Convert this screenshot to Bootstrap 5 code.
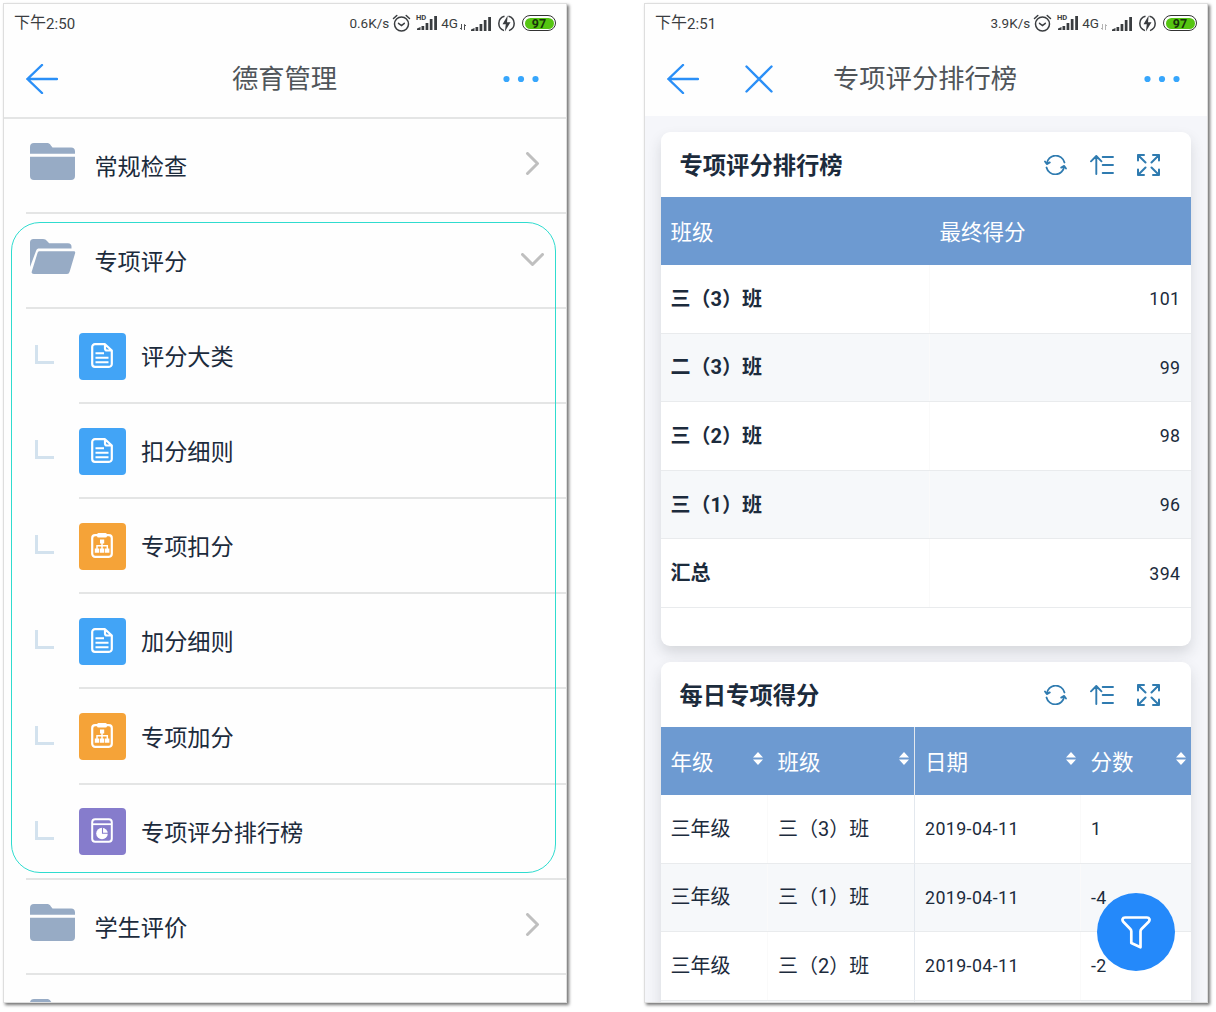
<!DOCTYPE html>
<html lang="zh-CN">
<head>
<meta charset="utf-8">
<meta name="viewport" content="width=device-width, initial-scale=1">
<title>德育管理</title>
<link href="https://cdn.jsdelivr.net/npm/bootstrap@5.3.0/dist/css/bootstrap.min.css" rel="stylesheet">
<style>
  body { font-family: Roboto, "Noto Sans CJK SC", sans-serif; background: #fff; color: #1c2b3c; min-height: 100vh; }
  svg { display: block; flex: none; overflow: visible; }
  .stage { padding: 3px 0 0 3px; gap: 77px; height: 1012px; overflow: hidden; }
  .phone { width: 564px; height: 1000px; border: 1px solid #dedede; background: #fefefe; box-shadow: 2px 2px 3px rgba(0,0,0,.55); overflow: hidden; flex: none; }

  .statusbar { height: 38px; padding: 0 10px 0 10px; color: #3a3d40; font-size: 13.5px; line-height: 38px; }
  .statusbar .clock { font-size: 16px; }
  .statusbar .clock span { font-size: 15px; letter-spacing: .1px; position: relative; top: 1px; }
  .batt { width: 34px; height: 16px; border: 1.5px solid #333; border-radius: 8px; padding: 1.5px; margin-left: 7px; }
  .batt div { background: #55c511; border-radius: 6px; height: 100%; color: #17330a; font-size: 12.5px; font-weight: 700; line-height: 11px; text-align: center; }

  .topbar { height: 74px; padding: 0 27px 0 22px; color: #50555a; }
  .topbar h1 { font-size: 26.3px; font-weight: 400; line-height: 40px; margin: 0; }
  .topbar.ruled { height: 77px; padding-bottom: 2px; border-bottom: 2px solid #e4e5e5; }
  .topbar.ruled h1 { margin-left: 8px; }

  .menu-row { height: 95.09px; margin-left: 22px; border-bottom: 2px solid #e4e5e5; padding: 0 26px 0 4px; }
  .menu-row.sub { margin-left: 75px; padding-left: 0; }
  .menu-row.last-sub { margin-left: 22px; padding-left: 53px; }
  .menu-row .cap { font-size: 23.2px; line-height: 34px; margin-left: 19.4px; padding-top: 3px; }
  .menu-row.sub .cap { margin-left: 15px; }
  .menu-row .folder { margin-bottom: 8px; }
  .elbow { width: 19px; height: 19px; border: solid #d3e2ee; border-width: 0 0 3px 3px; margin: -2px 25px 0 -44px; }
  .tile { width: 47px; height: 47px; border-radius: 4px; color: #fff; margin-top: 1px; }
  .tile svg { margin: -2px 1px 0 0; }
  .tile-blue { background: #42a4f6; } .tile-orange { background: #f5a338; } .tile-violet { background: #867ccc; }
  .frame { left: 7px; top: 218px; width: 545px; height: 651px; border: 1px solid #2fdccf; border-radius: 29px; pointer-events: none; }

  .board { background: #f5f6fa; height: 889px; padding: 16px 15px 0 15.5px; }
  .panel { --bs-card-border-width: 0; --bs-card-border-radius: 9px; border-radius: 9px; box-shadow: 0 7px 14px rgba(40,45,55,.15); height: 514px; margin-bottom: 16px; overflow: hidden; color: #1c2b3c; width: 530px; }
  .panel-head { height: 65px; flex: none; padding: 0 31px 0 19px; color: #2f7bb0; }
  .panel-head h2 { font-size: 23.3px; font-weight: 700; margin: 0; padding-top: 4px; color: #1c2b3c; }
  .panel-head .tools { gap: 23px; }
  .grid-tb { table-layout: fixed; margin: 0; font-size: 20px; width: 530px; }
  .grid-tb > :not(caption) > * > * { padding: 0 10px 0 10px; height: 68.6px; border-bottom: 1px solid #e9ebed; vertical-align: middle; background: #fff; color: #1c2b3c; box-shadow: none; white-space: nowrap; line-height: 30px; }
  .grid-tb > thead > tr > th { height: 67.5px; background: #6d9ad1; color: #fff; font-size: 21.5px; font-weight: 400; border-bottom: 0; padding-top: 4px; }
  .grid-tb > tbody > tr:nth-child(even) > td { background: #f6f8fa; }
  .grid-tb > tbody > tr > td + td { border-left: 1px solid #fafafa; }
  .grid-tb > thead > tr > th.split, .grid-tb > tbody > tr > td.split { border-right: 1px solid #e3e8ee; }
  .grid-tb > tbody > tr > td.num { font-size: 17.8px; letter-spacing: .4px; padding-top: 1px; }
  .grid-tb > thead > tr > th.sorter { padding-right: 5px; }
  .fab { right: 32px; bottom: 31px; width: 78px; height: 78px; border-radius: 50%; background: #2489fa; color: #fff; }
</style>
</head>
<body>
<svg width="0" height="0" class="position-absolute">
  <symbol id="back" viewBox="0 0 32 30"><path d="M16 1 1.500 15l14.500 14M1.500 15h29.500" fill="none" stroke="#2a8ff7" stroke-width="2.400" stroke-linecap="round"/></symbol>
  <symbol id="dots" viewBox="0 0 36 8"><g fill="#37a6fc"><circle cx="3.500" cy="4" r="3.100"/><circle cx="18" cy="4" r="3.100"/><circle cx="32.500" cy="4" r="3.100"/></g></symbol>
  <symbol id="alarm" viewBox="0 0 19 18"><g fill="none" stroke="#3a3d40" stroke-width="1.500" stroke-linecap="round"><circle cx="9.500" cy="10" r="7"/><path d="m6.500 9.300 3 2.200 2.800-2.200M1.500 4.500 4.800 1.500M17.500 4.500l-3.300-3"/></g></symbol>
  <symbol id="signal" viewBox="0 0 20 15"><path d="M0 15v-1.500L3.500 12v3zM4.500 11h2.700v4H4.500zM8.600 8h2.700v7H8.600zM12.800 4h2.700v11h-2.700zM17.200 1h2.800v14h-2.800z" fill="#3a3d40"/></symbol>
  <symbol id="updown" viewBox="0 0 6 6"><path d="M1.500 0v5.500L0 4M4.500 6V.5L6 2" fill="none" stroke="currentColor" stroke-width=".9"/></symbol>
  <symbol id="bolt" viewBox="0 0 17 17"><path d="M6.500 1.200a7.500 7.500 0 0 0-.5 14.400M10.500 1.200a7.500 7.500 0 0 1 .5 14.400" fill="none" stroke="#3a3d40" stroke-width="1.500"/><path d="M9.700.5 4.500 9.300h3.300L6.900 16.500l5.600-9.300H9z" fill="#3a3d40"/></symbol>
  <symbol id="folder" viewBox="0 0 45 37"><path d="M0 10.700V4a4 4 0 0 1 4-4h13.500c1.600 0 2.400 1 3.200 2.200L22.500 4.500H41a4 4 0 0 1 4 4v2.200zM0 13.700h45V33a4 4 0 0 1-4 4H4a4 4 0 0 1-4-4z" fill="#97abc5"/></symbol>
  <symbol id="folder-open" viewBox="0 0 46 35"><path d="M0 28V3.500A3.500 3.500 0 0 1 3.500 0H13c2 0 3 .8 4 2l2.200 2.200H38a3.500 3.500 0 0 1 3.500 3.500V9.500H9.500C7.500 9.500 6.700 10 6 12zM9.500 12.300h34c1.500 0 2 .8 1.600 2L39.700 32.500c-.6 1.700-1.200 2.500-2.700 2.500H4c-2 0-2.700-1-2.200-2.500L7.500 14c.4-1.200 1-1.700 2-1.700z" fill="#97abc5"/></symbol>
  <symbol id="right" viewBox="0 0 13 23"><path d="m1.500 1.500 10 10-10 10" fill="none" stroke="#bfbfbf" stroke-width="3" stroke-linecap="round" stroke-linejoin="round"/></symbol>
  <symbol id="down" viewBox="0 0 23 13"><path d="m1.500 1.500 10 10 10-10" fill="none" stroke="#bfbfbf" stroke-width="3" stroke-linecap="round" stroke-linejoin="round"/></symbol>
  <symbol id="doc" viewBox="0 0 22 25"><g fill="none" stroke="#fff" stroke-width="2.200"><path d="M14 1.200H4a2.800 2.800 0 0 0-2.800 2.800v17A2.800 2.800 0 0 0 4 23.800h14a2.800 2.800 0 0 0 2.800-2.800V7.500zM14 1.200V5.500a2 2 0 0 0 2 2h4.800" stroke-linejoin="round"/><path d="M4.500 10.200h8.500M4.500 14.700h13M4.500 19.200h13" stroke-width="2"/></g></symbol>
  <symbol id="org" viewBox="0 0 22 25"><rect x="1.200" y="2.200" width="19.600" height="21.600" rx="3" fill="none" stroke="#fff" stroke-width="2.200"/><rect x="6" y="0" width="10" height="4.500" rx="1.500" fill="#fff"/><path d="M9 6.500h4.200v4H9zM3.800 15.500h4.400v4.300H3.800zM8.900 15.500h4.400v4.300H8.900zM14 15.500h4.400v4.300H14z" fill="#fff"/><path d="M11 10v6M6 16v-3.200h10.300V16" fill="none" stroke="#fff" stroke-width="1.500"/></symbol>
  <symbol id="report" viewBox="0 0 22 25"><rect x="1.200" y="1.200" width="19.600" height="22.600" rx="3" fill="none" stroke="#fff" stroke-width="2"/><path d="M2 6.200h18" stroke="#fff" stroke-width="1.800"/><circle cx="11" cy="15.500" r="5.800" fill="#fff"/><path d="M11.500 9.500v5.700h5.700" fill="none" stroke="#867ccc" stroke-width="1.100"/></symbol>
  <symbol id="refresh" viewBox="0 0 22 20"><g fill="none" stroke="currentColor" stroke-width="1.800" stroke-linecap="round" stroke-linejoin="round"><path d="M2.300 8.800A9 9 0 0 1 20 7.500M19.700 11.200A9 9 0 0 1 2 12.500M.5 6.500l1.800 2.600 3-1.700M21.500 13.500l-1.800-2.600-3 1.700"/></g></symbol>
  <symbol id="sort" viewBox="0 0 24 20"><g fill="none" stroke="currentColor" stroke-width="1.900" stroke-linecap="round" stroke-linejoin="round"><path d="M6.300 19V1M1 6.300 6.300 1l5.200 5.300M12.700 2H23M12.700 10H23M12.700 18H23"/></g></symbol>
  <symbol id="expand" viewBox="0 0 23 22"><path d="M1 6.500V1h6M1 1l7.500 7.500M16 1h6v5.500M22 1l-7.500 7.500M1 15.500V21h6M1 21l7.500-7.500M22 15.500V21h-6M22 21l-7.500-7.500" fill="none" stroke="currentColor" stroke-width="2" stroke-linecap="round" stroke-linejoin="round"/></symbol>
  <symbol id="updn" viewBox="0 0 10 13"><path d="M0 5.500 5 0l5 5.500zM0 7.500 5 13l5-5.500z" fill="#fff"/></symbol>
  <symbol id="funnel" viewBox="0 0 30 33"><path d="M4 1.500h22c2.500 0 3.300 2.500 1.700 4.200L20.500 13c-.8.800-1 1.300-1 2.300v16L10.300 27V15.300c0-1-.2-1.500-1-2.300L2.300 5.700C.7 4 1.500 1.500 4 1.500z" fill="none" stroke="#fff" stroke-width="2.700" stroke-linejoin="round"/></symbol>
</svg>

<main class="stage d-flex">
  <section class="phone position-relative">
    <div class="statusbar d-flex align-items-center">
      <div class="clock me-auto">下午<span>2:50</span></div>
      <div>0.6K/s</div>
      <svg width="19" height="18" style="margin-left:3px"><use href="#alarm"/></svg>
      <svg width="21" height="18" style="margin-left:5px"><text x="0" y="5.500" font-size="7.600" font-weight="700" fill="#3a3d40">HD</text><use href="#signal" x="1" y="1" width="20" height="15"/></svg>
      <div style="margin-left:4px">4G</div>
      <svg width="6" height="6" style="margin:7px 0 0 2px"><use href="#updown"/></svg>
      <svg width="20" height="15" style="margin-left:5px"><use href="#signal"/></svg>
      <svg width="17" height="17" style="margin-left:7px"><use href="#bolt"/></svg>
      <div class="batt"><div>97</div></div>
    </div>
    <header class="topbar ruled d-flex align-items-center justify-content-between">
      <svg width="32" height="30"><use href="#back"/></svg>
      <h1>德育管理</h1>
      <svg width="36" height="8"><use href="#dots"/></svg>
    </header>
    <nav>
      <div class="menu-row d-flex align-items-center"><svg class="folder" width="45" height="37"><use href="#folder"/></svg><span class="cap me-auto">常规检查</span><svg class="mb-1" width="15" height="23"><use href="#right"/></svg></div>
      <div class="menu-row d-flex align-items-center"><svg class="folder" width="46" height="35"><use href="#folder-open"/></svg><span class="cap me-auto" style="margin-left:18.4px">专项评分</span><svg style="margin:0 -4px 2px 0" width="23" height="13"><use href="#down"/></svg></div>
      <div class="menu-row sub d-flex align-items-center"><i class="elbow"></i><span class="tile tile-blue d-flex align-items-center justify-content-center"><svg width="22" height="25"><use href="#doc"/></svg></span><span class="cap">评分大类</span></div>
      <div class="menu-row sub d-flex align-items-center"><i class="elbow"></i><span class="tile tile-blue d-flex align-items-center justify-content-center"><svg width="22" height="25"><use href="#doc"/></svg></span><span class="cap">扣分细则</span></div>
      <div class="menu-row sub d-flex align-items-center"><i class="elbow"></i><span class="tile tile-orange d-flex align-items-center justify-content-center"><svg width="22" height="25"><use href="#org"/></svg></span><span class="cap">专项扣分</span></div>
      <div class="menu-row sub d-flex align-items-center"><i class="elbow"></i><span class="tile tile-blue d-flex align-items-center justify-content-center"><svg width="22" height="25"><use href="#doc"/></svg></span><span class="cap">加分细则</span></div>
      <div class="menu-row sub d-flex align-items-center"><i class="elbow"></i><span class="tile tile-orange d-flex align-items-center justify-content-center"><svg width="22" height="25"><use href="#org"/></svg></span><span class="cap">专项加分</span></div>
      <div class="menu-row sub last-sub d-flex align-items-center"><i class="elbow"></i><span class="tile tile-violet d-flex align-items-center justify-content-center"><svg width="22" height="25"><use href="#report"/></svg></span><span class="cap">专项评分排行榜</span></div>
      <div class="menu-row d-flex align-items-center"><svg class="folder" width="45" height="37"><use href="#folder"/></svg><span class="cap me-auto">学生评价</span><svg class="mb-1" width="15" height="23"><use href="#right"/></svg></div>
      <div class="menu-row d-flex align-items-center"><svg class="folder" width="45" height="37"><use href="#folder"/></svg></div>
    </nav>
    <div class="frame position-absolute"></div>
  </section>

  <section class="phone position-relative">
    <div class="statusbar d-flex align-items-center">
      <div class="clock me-auto">下午<span>2:51</span></div>
      <div>3.9K/s</div>
      <svg width="19" height="18" style="margin-left:3px"><use href="#alarm"/></svg>
      <svg width="21" height="18" style="margin-left:5px"><text x="0" y="5.500" font-size="7.600" font-weight="700" fill="#3a3d40">HD</text><use href="#signal" x="1" y="1" width="20" height="15"/></svg>
      <div style="margin-left:4px">4G</div>
      <svg width="6" height="6" style="margin:7px 0 0 2px;color:#aaa"><use href="#updown"/></svg>
      <svg width="20" height="15" style="margin-left:5px"><use href="#signal"/></svg>
      <svg width="17" height="17" style="margin-left:7px"><use href="#bolt"/></svg>
      <div class="batt"><div>97</div></div>
    </div>
    <header class="topbar d-flex align-items-center">
      <svg width="32" height="30"><use href="#back"/></svg>
      <svg width="28" height="28" viewBox="0 0 28 28" style="margin-left:46px"><path d="m1.500 1.500 25 25M26.500 1.500l-25 25" fill="none" stroke="#2a8ff7" stroke-width="2.400" stroke-linecap="round"/></svg>
      <h1 class="me-auto" style="margin-left:60px">专项评分排行榜</h1>
      <svg width="36" height="8"><use href="#dots"/></svg>
    </header>
    <div class="board">
      <article class="card panel">
        <div class="panel-head d-flex align-items-center justify-content-between">
          <h2>专项评分排行榜</h2>
          <div class="tools d-flex align-items-center"><svg width="23" height="20"><use href="#refresh"/></svg><svg width="24" height="20"><use href="#sort"/></svg><svg width="23" height="22"><use href="#expand"/></svg></div>
        </div>
        <table class="table grid-tb">
          <colgroup><col style="width:269px"><col></colgroup>
          <thead><tr><th>班级</th><th>最终得分</th></tr></thead>
          <tbody>
            <tr><td class="fw-bold">三（3）班</td><td class="num text-end">101</td></tr>
            <tr><td class="fw-bold">二（3）班</td><td class="num text-end">99</td></tr>
            <tr><td class="fw-bold">三（2）班</td><td class="num text-end">98</td></tr>
            <tr><td class="fw-bold">三（1）班</td><td class="num text-end">96</td></tr>
            <tr><td class="fw-bold">汇总</td><td class="num text-end">394</td></tr>
          </tbody>
        </table>
      </article>
      <article class="card panel">
        <div class="panel-head d-flex align-items-center justify-content-between">
          <h2>每日专项得分</h2>
          <div class="tools d-flex align-items-center"><svg width="23" height="20"><use href="#refresh"/></svg><svg width="24" height="20"><use href="#sort"/></svg><svg width="23" height="22"><use href="#expand"/></svg></div>
        </div>
        <table class="table grid-tb">
          <colgroup><col style="width:107px"><col style="width:147px"><col style="width:166px"><col></colgroup>
          <thead><tr>
            <th class="sorter"><div class="d-flex justify-content-between align-items-center">年级<svg class="mb-2" width="10" height="13"><use href="#updn"/></svg></div></th>
            <th class="sorter split"><div class="d-flex justify-content-between align-items-center">班级<svg class="mb-2" width="10" height="13"><use href="#updn"/></svg></div></th>
            <th class="sorter"><div class="d-flex justify-content-between align-items-center">日期<svg class="mb-2" width="10" height="13"><use href="#updn"/></svg></div></th>
            <th class="sorter"><div class="d-flex justify-content-between align-items-center">分数<svg class="mb-2" width="10" height="13"><use href="#updn"/></svg></div></th>
          </tr></thead>
          <tbody>
            <tr><td>三年级</td><td class="split">三（3）班</td><td class="num">2019-04-11</td><td class="num">1</td></tr>
            <tr><td>三年级</td><td class="split">三（1）班</td><td class="num">2019-04-11</td><td class="num">-4</td></tr>
            <tr><td>三年级</td><td class="split">三（2）班</td><td class="num">2019-04-11</td><td class="num">-2</td></tr>
            <tr><td></td><td class="split"></td><td></td><td></td></tr>
          </tbody>
        </table>
      </article>
    </div>
    <button class="btn fab position-absolute p-0 border-0 d-flex align-items-center justify-content-center" type="button" aria-label="筛选"><svg width="30" height="33"><use href="#funnel"/></svg></button>
  </section>
</main>
<script src="https://cdn.jsdelivr.net/npm/bootstrap@5.3.0/dist/js/bootstrap.bundle.min.js"></script>
</body>
</html>
